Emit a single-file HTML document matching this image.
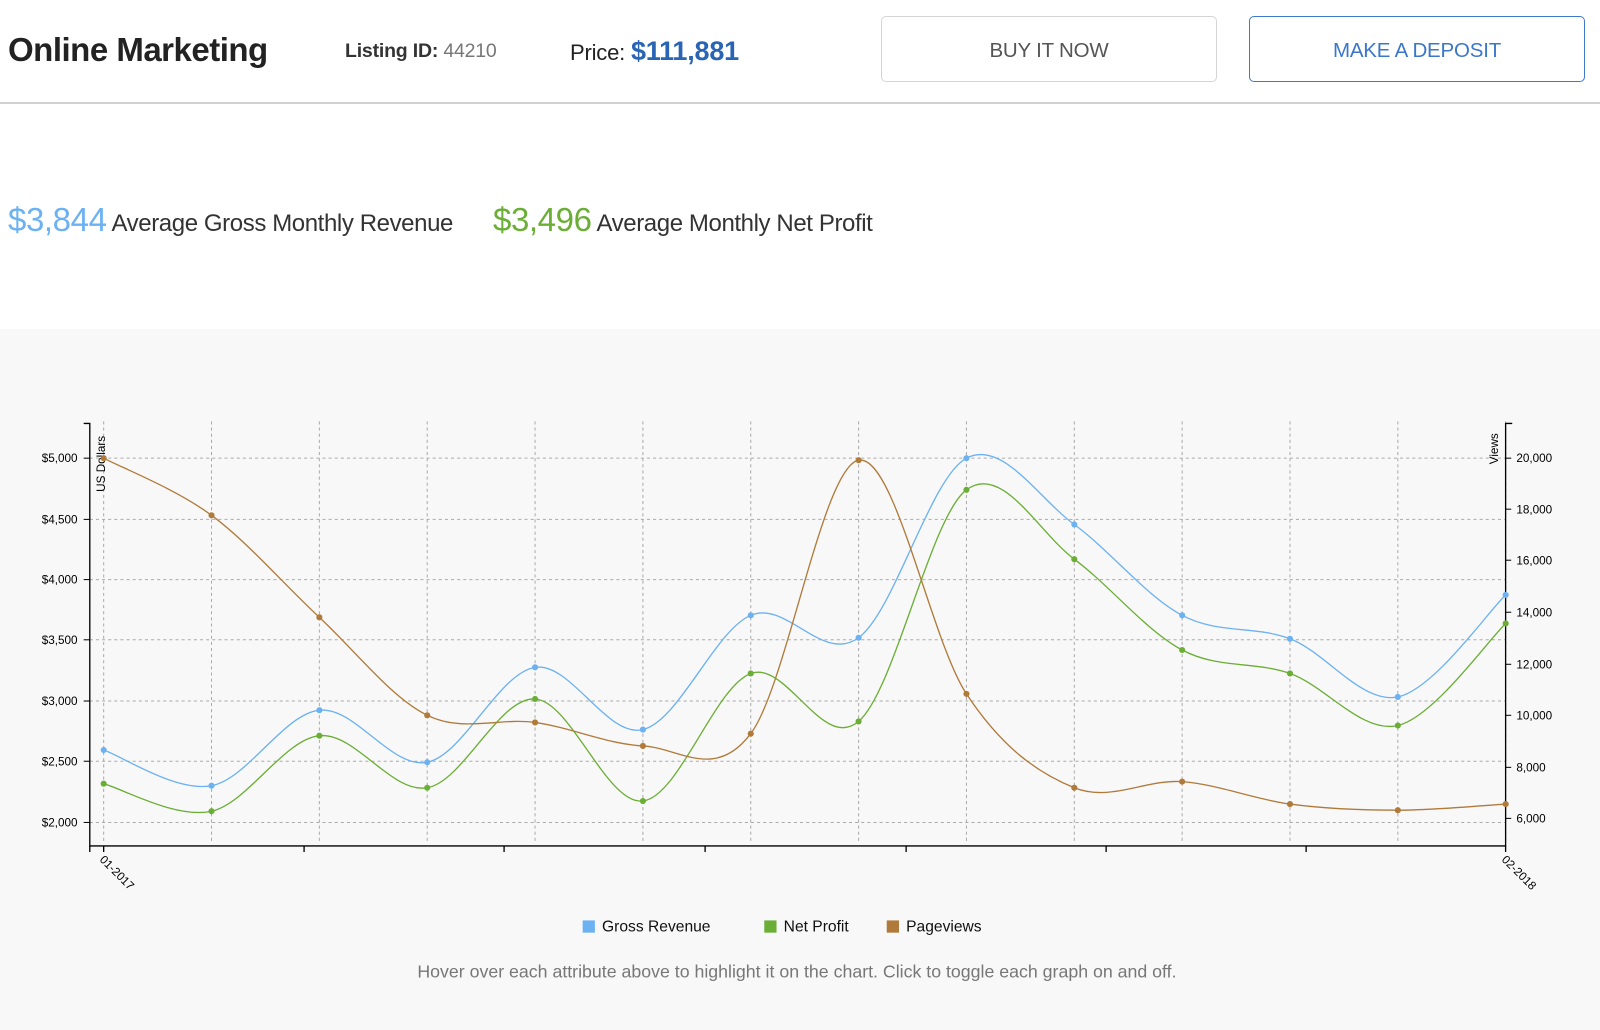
<!DOCTYPE html>
<html><head><meta charset="utf-8">
<style>
html,body{margin:0;padding:0;width:1600px;height:1030px;overflow:hidden;background:#fff;font-family:"Liberation Sans",sans-serif;}
.abs{position:absolute;white-space:nowrap;}
#title{left:8px;top:31px;font-size:33px;font-weight:bold;color:#222;letter-spacing:-0.5px;}
#lid{left:345px;top:40px;font-size:19.5px;color:#333;letter-spacing:-0.2px;}
#lid b{color:#333}
#lid span{color:#777}
#price{left:570px;top:36px;font-size:22px;color:#222;letter-spacing:-0.2px;}
#price b{color:#2a64b5;font-size:27px;}
.btn{position:absolute;top:16px;height:66px;width:336px;box-sizing:border-box;border-radius:5px;font-size:20.5px;display:flex;align-items:center;justify-content:center;letter-spacing:-0.2px;padding-top:3px;}
#buy{left:881px;border:1.5px solid #d4d4d4;color:#555;}
#dep{left:1249px;border:1.5px solid #3e78cf;color:#3b77c9;}
#sep{position:absolute;left:0;top:102px;width:1600px;height:2px;background:#d0d0d0;}
.stat{top:201px;font-size:24px;color:#333;letter-spacing:-0.4px;}
.stat b{font-weight:normal;font-size:33px;}
#gray{position:absolute;left:0;top:329px;width:1600px;height:701px;background:#f8f8f8;}
svg{position:absolute;left:0;top:0;}
</style></head><body>
<div class="abs" id="title">Online Marketing</div>
<div class="abs" id="lid"><b>Listing ID:</b> <span>44210</span></div>
<div class="abs" id="price">Price: <b>$111,881</b></div>
<div class="btn" id="buy">BUY IT NOW</div>
<div class="btn" id="dep">MAKE A DEPOSIT</div>
<div id="sep"></div>
<div class="abs stat" style="left:8px"><b style="color:#6cb2f2">$3,844</b> Average Gross Monthly Revenue</div>
<div class="abs stat" style="left:493px"><b style="color:#6bae35">$3,496</b> Average Monthly Net Profit</div>
<div id="gray"></div>
<svg id="ch" width="1600" height="1030" viewBox="0 0 1568 1009.4" font-family="Liberation Sans, sans-serif">
</svg>
<script>
(function(){
var s=document.getElementById('ch'),h='';
var X=[];for(var i=0;i<14;i++)X.push(101.6+i*105.69);
var gy=[449,509,568,627,687,746,806],gl=['$5,000','$4,500','$4,000','$3,500','$3,000','$2,500','$2,000'];
var ry=[449,499,549,600,651,701,752,802],rl=['20,000','18,000','16,000','14,000','12,000','10,000','8,000','6,000'];
X.forEach(function(x){h+='<line x1="'+x+'" y1="413" x2="'+x+'" y2="826" stroke="#aaa" stroke-dasharray="3,3"/>';});
gy.forEach(function(y,i){h+='<line x1="88" y1="'+y+'" x2="1475" y2="'+y+'" stroke="#aaa" stroke-dasharray="3,3"/>';
 h+='<line x1="82" y1="'+y+'" x2="88" y2="'+y+'" stroke="#000"/><text x="76" y="'+(y+4)+'" font-size="11.5" text-anchor="end" fill="#000">'+gl[i]+'</text>';});
ry.forEach(function(y,i){h+='<line x1="1475.5" y1="'+y+'" x2="1481" y2="'+y+'" stroke="#000"/><text x="1486" y="'+(y+4)+'" font-size="11.5" fill="#000">'+rl[i]+'</text>';});
h+='<path d="M82,415H88V829H1475.5V415H1482" fill="none" stroke="#000" stroke-width="1.3"/>';
h+='<path d="M88,829V835" stroke="#000" stroke-width="1.3"/>';
[101.6,298,494,691,888,1084,1280,1475.5].forEach(function(x){h+='<line x1="'+x+'" y1="829" x2="'+x+'" y2="835" stroke="#000" stroke-width="1.3"/>';});
h+='<text transform="translate(103,482) rotate(-90)" font-size="11.5">US Dollars</text>';
h+='<text transform="translate(1468,455) rotate(-90)" font-size="11.5">Views</text>';
h+='<text transform="translate(97,843) rotate(45)" font-size="11.5">01-2017</text>';
h+='<text transform="translate(1471,843) rotate(45)" font-size="11.5">02-2018</text>';
var D=[['#6cb2f2',[735,770,696,747,654,715,603,625,449,514,603,626,683,583]],
['#6bae35',[768,795,721,772,685,785,660,707,480,548,637,660,711,611]],
['#b07a3a',[449,505,605,701,708,731,719,451,680,772,766,788,794,788]]];
D.forEach(function(d){var c=d[0],Y=d[1],p='M'+X[0]+','+Y[0];
 for(var i=0;i<13;i++){var i0=Math.max(0,i-1),i3=Math.min(13,i+2);
  var c1x=X[i]+(X[i+1]-X[i0])/6,c1y=Y[i]+(Y[i+1]-Y[i0])/6,c2x=X[i+1]-(X[i3]-X[i])/6,c2y=Y[i+1]-(Y[i3]-Y[i])/6;
  p+='C'+c1x.toFixed(1)+','+c1y.toFixed(1)+' '+c2x.toFixed(1)+','+c2y.toFixed(1)+' '+X[i+1].toFixed(1)+','+Y[i+1];}
 h+='<path d="'+p+'" fill="none" stroke="'+c+'" stroke-width="1.3"/>';
 X.forEach(function(x,i){h+='<circle cx="'+x+'" cy="'+Y[i]+'" r="3" fill="'+c+'"/>';});});
var L=[[571,'#6cb2f2','Gross Revenue'],[749,'#6bae35','Net Profit'],[869,'#b07a3a','Pageviews']];
L.forEach(function(l){h+='<rect x="'+l[0]+'" y="902" width="12" height="12" fill="'+l[1]+'"/><text x="'+(l[0]+19)+'" y="913" font-size="15.3" fill="#111">'+l[2]+'</text>';});
h+='<text x="781" y="958" font-size="17.5" fill="#777" text-anchor="middle" textLength="744" lengthAdjust="spacingAndGlyphs">Hover over each attribute above to highlight it on the chart. Click to toggle each graph on and off.</text>';
s.innerHTML=h;
})();
</script>
</body></html>
